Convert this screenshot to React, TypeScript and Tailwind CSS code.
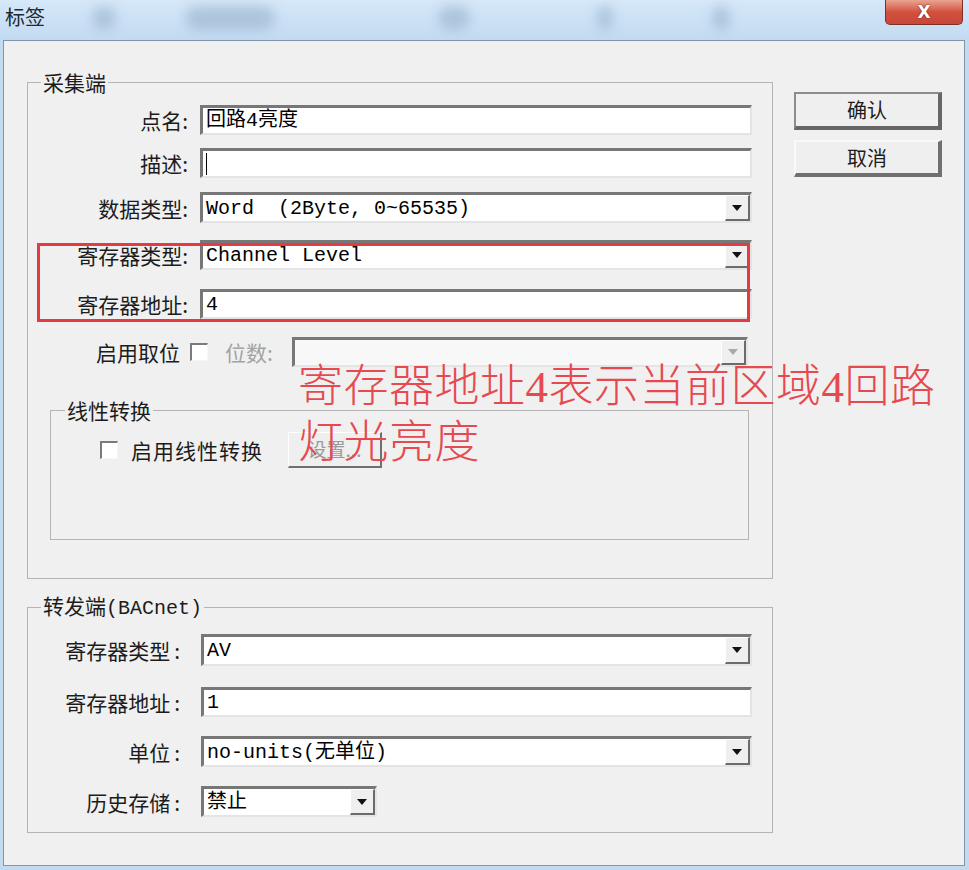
import type { ReactNode } from "react";

const ui = "font-['Noto_Sans_CJK_SC',sans-serif]";
const mono = "font-['Liberation_Mono','Noto_Sans_CJK_SC',monospace]";

const Arrow = ({ disabled }: { disabled?: boolean }) => (
  <div className="flex h-full w-[25px] items-center justify-center border-t border-l border-white border-r-2 border-b-2 border-r-[#6b6b6b] border-b-[#6b6b6b] bg-[#efefef]">
    <svg width="10" height="6" viewBox="0 0 10 6">
      <path d="M0 0h10L5 6z" fill={disabled ? "#a9a9a9" : "#111"} />
    </svg>
  </div>
);

const Box = ({
  className,
  children,
  combo,
  disabled,
}: {
  className: string;
  children?: ReactNode;
  combo?: boolean;
  disabled?: boolean;
}) => (
  <div
    className={`flex h-full border-t-[3px] border-l-[3px] border-r-2 border-b-2 border-t-[#777777] border-l-[#777777] border-r-[#e4e4e4] border-b-[#e4e4e4] ${
      disabled ? "bg-[#f8f8f8]" : "bg-white"
    } ${className}`}
  >
    <div className={`${mono} flex flex-1 items-center whitespace-pre pl-[3px] pt-px text-[20px] text-black`}>{children}</div>
    {combo && <Arrow disabled={disabled} />}
  </div>
);

const Label = ({ className, children }: { className: string; children: ReactNode }) => (
  <div className={`${ui} shrink-0 text-right text-[21px] leading-[30px] text-[#1c1c1c] ${className}`}>{children}</div>
);

const Check = () => (
  <div className="h-[18px] w-[18px] shrink-0 border-t-2 border-l-2 border-r border-b border-t-[#7a7a7a] border-l-[#7a7a7a] border-r-[#f6f6f6] border-b-[#f6f6f6] bg-white" />
);

// blurred shapes behind the glass title bar
const smudges = [
  { l: "left-[92px]", w: "w-[24px]" },
  { l: "left-[185px]", w: "w-[90px]" },
  { l: "left-[438px]", w: "w-[32px]" },
  { l: "left-[597px]", w: "w-[16px]" },
  { l: "left-[712px]", w: "w-[18px]" },
];

export default function App() {
  return (
    <div className={`${ui} relative h-[870px] w-[969px] overflow-hidden bg-[#c3dbf1]`}>
      {/* Title bar */}
      <div className="relative flex h-[40px] items-start bg-gradient-to-b from-[#d6e8f9] to-[#c2daf1]">
        {smudges.map((s, i) => (
          <div key={i} className={`absolute top-[6px] h-[24px] rounded-full bg-[#8ea8c2] opacity-50 blur-[6px] ${s.l} ${s.w}`} />
        ))}
        <span className="relative ml-[5px] mt-[5px] text-[20px] leading-[24px] text-[#1d2a33]">标签</span>
        <div className="relative ml-auto mr-[6px] flex h-[25px] w-[78px] items-center justify-center rounded-b-[5px] border border-t-0 border-[#7d3027] bg-gradient-to-b from-[#e9a392] via-[#d3503f] to-[#c7473a]">
          <span className="font-['DejaVu_Sans',sans-serif] text-[17px] font-bold leading-none text-white [text-shadow:0_0_2px_#5a1a12]">X</span>
        </div>
      </div>

      {/* Client area */}
      <div className="ml-[3px] flex h-[826px] w-[962px] border border-[#8296aa] bg-[#f0f0f0]">
        <div className="ml-[23px] mt-[31px] flex w-[746px] flex-col">
          {/* 采集端 */}
          <fieldset className="h-[507px] border border-[#b4b4b4]">
            <legend className="ml-[13px] px-[2px] text-[21px] leading-[20px] text-[#1c1c1c]">采集端</legend>

            <div className="mt-[13px] flex h-[30px] items-center">
              <Label className="w-[160px]">点名:</Label>
              <Box className="ml-[12px] w-[552px]">回路4亮度</Box>
            </div>
            <div className="mt-[13px] flex h-[30px] items-center">
              <Label className="w-[160px]">描述:</Label>
              <Box className="ml-[12px] w-[552px]">
                <span className="h-[22px] w-px bg-black" />
              </Box>
            </div>
            <div className="mt-[14px] flex h-[31px] items-center">
              <Label className="w-[160px]">数据类型:</Label>
              <Box combo className="ml-[12px] w-[552px]">Word  (2Byte, 0~65535)</Box>
            </div>
            <div className="mt-[17px] flex h-[30px] items-center">
              <Label className="w-[160px]">寄存器类型:</Label>
              <Box combo className="ml-[12px] w-[552px]">Channel Level</Box>
            </div>
            <div className="mt-[19px] flex h-[30px] items-center">
              <Label className="w-[160px]">寄存器地址:</Label>
              <Box className="ml-[12px] w-[552px]">4</Box>
            </div>
            <div className="mt-[18px] flex h-[30px] items-center">
              <Label className="w-[152px]">启用取位</Label>
              <div className="ml-[10px]">
                <Check />
              </div>
              <span className="ml-[17px] w-[52px] text-[21px] leading-[30px] text-[#a3a3a3]">位数:</span>
              <Box combo disabled className="ml-[15px] w-[456px]" />
            </div>

            {/* 线性转换 */}
            <fieldset className="ml-[22px] mt-[33px] h-[140px] w-[699px] border border-[#b4b4b4]">
              <legend className="ml-[14px] px-[2px] text-[21px] leading-[20px] text-[#1c1c1c]">线性转换</legend>
              <div className="mt-[12px] flex h-[36px] items-center pl-[49px]">
                <Check />
                <span className="ml-[13px] text-[21px] leading-[30px] tracking-[1px] text-[#1c1c1c]">启用线性转换</span>
                <div className="ml-[25px] flex h-[36px] w-[94px] items-center justify-center border-t border-l border-white border-r-2 border-b-2 border-r-[#6f6f6f] border-b-[#6f6f6f] bg-[#efefef] text-[19px] text-[#9a9a9a]">
                  设置...
                </div>
              </div>
            </fieldset>
          </fieldset>

          {/* 转发端 */}
          <fieldset className="mt-[16px] h-[238px] border border-[#b4b4b4]">
            <legend className="ml-[13px] px-[2px] text-[21px] leading-[20px] text-[#1c1c1c]">
              转发端<span className={`${mono} text-[20px]`}>(BACnet)</span>
            </legend>

            <div className="mt-[15px] flex h-[32px] items-center">
              <Label className="w-[152px]">
                寄存器类型<span className="ml-[4px]">:</span>
              </Label>
              <Box combo className="ml-[21px] w-[551px]">AV</Box>
            </div>
            <div className="mt-[21px] flex h-[30px] items-center">
              <Label className="w-[152px]">
                寄存器地址<span className="ml-[4px]">:</span>
              </Label>
              <Box className="ml-[21px] w-[551px]">1</Box>
            </div>
            <div className="mt-[19px] flex h-[31px] items-center">
              <Label className="w-[152px]">
                单位<span className="ml-[4px]">:</span>
              </Label>
              <Box combo className="ml-[21px] w-[551px]">no-units(无单位)</Box>
            </div>
            <div className="mt-[19px] flex h-[31px] items-center">
              <Label className="w-[152px]">
                历史存储<span className="ml-[4px]">:</span>
              </Label>
              <Box combo className="ml-[21px] w-[176px]">禁止</Box>
            </div>
          </fieldset>
        </div>

        {/* Buttons */}
        <div className="ml-[21px] mt-[51px] flex flex-col gap-[10px]">
          <div className="flex h-[38px] w-[148px] items-center justify-center border-2 border-[#8c8c8c] border-r-4 border-b-4 border-r-[#666666] border-b-[#666666] bg-[#efefef] text-[20px] text-[#1c1c1c]">
            确认
          </div>
          <div className="flex h-[37px] w-[148px] items-center justify-center border-t-2 border-l-2 border-[#fafafa] border-r-4 border-b-4 border-r-[#707070] border-b-[#707070] bg-[#efefef] text-[20px] text-[#1c1c1c]">
            取消
          </div>
        </div>
      </div>

      {/* Annotation overlay */}
      <div className="absolute left-[37px] top-[243px] h-[79px] w-[713px] border-[3px] border-[#e23b41]" />
      <div className="absolute left-[298px] top-[359px] font-['Liberation_Serif','Noto_Sans_CJK_SC',serif] text-[45px] font-light leading-[56px] tracking-[0.5px] text-[#e6494f]">
        寄存器地址4表示当前区域4回路
        <br />
        灯光亮度
      </div>
    </div>
  );
}
